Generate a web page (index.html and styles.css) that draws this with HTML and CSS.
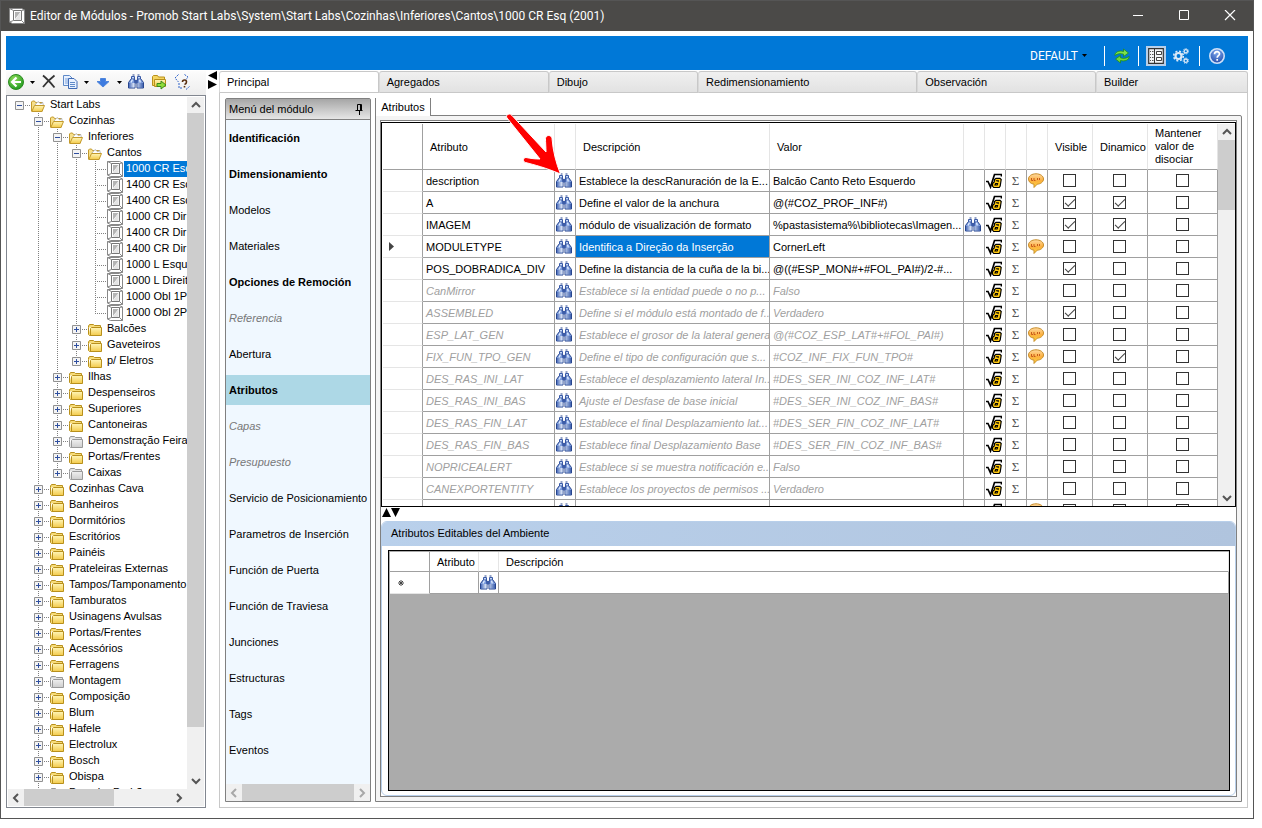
FILE: index.html
```html
<!DOCTYPE html>
<html lang="es">
<head>
    <meta charset="UTF-8">
    <meta name="viewport" content="width=device-width, initial-scale=1.0">
    <title>Editor de Módulos</title>
    <link rel="stylesheet" href="styles.css">
</head>
<body>

    <!-- Shared icons -->
    <svg class="sprite" aria-hidden="true">
        <defs>
            <linearGradient id="lens" x1="0" x2="1"><stop offset="0" stop-color="#4a6cba"/><stop offset=".4" stop-color="#f2f8ff"/><stop offset="1" stop-color="#3f62b0"/></linearGradient>
            <linearGradient id="gold" x1="0" x2="0" y1="0" y2="1"><stop offset="0" stop-color="#fff6b8"/><stop offset="1" stop-color="#f3ca4a"/></linearGradient>
            <linearGradient id="silver" x1="0" x2="0" y1="0" y2="1"><stop offset="0" stop-color="#f0f0f0"/><stop offset="1" stop-color="#cdcdcd"/></linearGradient>
            <linearGradient id="bubble" x1="0" x2="0" y1="0" y2="1"><stop offset="0" stop-color="#ffd9a0"/><stop offset=".5" stop-color="#fbb040"/><stop offset="1" stop-color="#ffd43a"/></linearGradient>
            <radialGradient id="green" cx=".4" cy=".3" r=".8"><stop offset="0" stop-color="#8fdc5a"/><stop offset="1" stop-color="#15941a"/></radialGradient>
            <radialGradient id="blue" cx=".5" cy=".25" r=".8"><stop offset="0" stop-color="#7fa8ee"/><stop offset="1" stop-color="#1f48a8"/></radialGradient>
        </defs>
        <symbol id="i-find" viewBox="0 0 16 16">
            <path d="M3.500 4.500h3l.5 4v5.500H.5V8.500zM9.500 4.500h3l3 4V14H9V8.500z" fill="#7b9bdc" stroke="#27458e"/>
            <path d="M6.500 6h3v3.500h-3z" fill="#3c5ca8"/>
            <path d="M3.500 2.500h3v2.500h-3zM9.500 2.500h3v2.500h-3z" fill="#c3d8f8" stroke="#3a5aa6"/>
            <path d="M4.500 1h2M9.500 1h2" stroke="#27458e"/>
            <path d="M1 9h5.500v4.500H1zM9.500 9H15v4.500H9.500z" fill="url(#lens)"/>
            <path d="M4.500 5.500L3 8.500M11.500 5.500l.8 3" stroke="#dceafe" stroke-width="1.400"/>
        </symbol>
        <symbol id="i-folder" viewBox="0 0 14 12">
            <path d="M.5 3.500v7l1 1h1.500M.5 3.500V2l1-1.500h4l1 1h6v2" fill="#f7dc78" stroke="#b8901c"/>
            <path d="M2.500 4.500l1-1h10v8h-11z" fill="url(#gold)" stroke="#b8901c"/>
        </symbol>
        <symbol id="i-folder-gray" viewBox="0 0 14 12">
            <path d="M.5 3.500v7l1 1h1.500M.5 3.500V2l1-1.500h4l1 1h6v2" fill="#e4e4e4" stroke="#999"/>
            <path d="M2.500 4.500l1-1h10v8h-11z" fill="url(#silver)" stroke="#999"/>
        </symbol>
        <symbol id="i-folder-open" viewBox="0 0 14 12">
            <path d="M.5 11V2l1-1h2l1 1.500h7v8.500z" fill="#f7e08a" stroke="#c39a2c"/>
            <path d="M4 5l3-3.500L10 4l1.500-2 1 3.500" fill="#fff" stroke="#aaa" stroke-width=".8"/>
            <path d="M.8 11.500L3.500 5.500h10l-2.500 6z" fill="url(#gold)" stroke="#c39a2c"/>
        </symbol>
        <symbol id="i-module" viewBox="0 0 16 16">
            <path d="M.5.500h12l3 1.500v13.500h-12L.5 14z" fill="#fff" stroke="#888"/>
            <path d="M4.500 2.500h8v10h-8z" fill="#fff" stroke="#777"/>
            <path d="M6 4h5.500L6 11z" fill="#b4b4b4"/>
            <path d="M6 12l5.500-8v8z" fill="#e4e4e4"/>
            <path d="M.5.500l4 2M15.500 2l-3 .5M.5 14l4-1.500M15.500 15.500l-3-3" stroke="#888"/>
        </symbol>
        <symbol id="i-formula" viewBox="0 0 16 16">
            <path d="M0 8.500h2L4.500 14 8.500 1.500h7v2" fill="none" stroke="#000" stroke-width="1.700"/>
            <path d="M8.500 6.500l1.500-1.200h4l1.200 1.200-1 6.500-1 1.500h-5.500L6.500 13v-2.500L8.200 9z" fill="#ffc90e" stroke="#000" stroke-width="1.200"/>
            <path d="M9.800 7.800h2.500l-.3 1.200M9 12l.6-1.500h2L11.200 12z" fill="none" stroke="#000" stroke-width="1.100"/>
        </symbol>
        <symbol id="i-comment" viewBox="0 0 16 16">
            <path d="M8 .8c4.300 0 7.500 2.200 7.500 5.200 0 2.800-2.700 5-6.300 5.200L6 14.500v-3.300C2.600 10.800.5 8.700.5 6 .5 3 3.700.8 8 .8z" fill="url(#bubble)" stroke="#c98f2c"/>
            <path d="M3.500 5v2.500H5M6 5v2.500h1.500M9.500 5v2M11.500 5v2" fill="none" stroke="#c85a1c"/>
        </symbol>
        <symbol id="i-up" viewBox="0 0 10 10"><path d="M1 7l4-4 4 4" fill="none" stroke="currentColor" stroke-width="2"/></symbol>
        <symbol id="i-down" viewBox="0 0 10 10"><path d="M1 3l4 4 4-4" fill="none" stroke="currentColor" stroke-width="2"/></symbol>
        <symbol id="i-left" viewBox="0 0 10 10"><path d="M7 1L3 5l4 4" fill="none" stroke="currentColor" stroke-width="2"/></symbol>
        <symbol id="i-right" viewBox="0 0 10 10"><path d="M3 1l4 4-4 4" fill="none" stroke="currentColor" stroke-width="2"/></symbol>
        <symbol id="i-caret" viewBox="0 0 5 3"><path d="M0 0h5L2.500 3z"/></symbol>
    </svg>

    <div class="window">
        <header class="title-bar">
            <svg class="icon title-icon"><use href="#i-module"/></svg>
            <h1 class="title">Editor de Módulos - Promob Start Labs\System\Start Labs\Cozinhas\Inferiores\Cantos\1000 CR Esq (2001)</h1>
            <div class="window-controls">
                <button aria-label="Minimizar"><svg width="12" height="12"><path d="M1 5.500h10" stroke="#fff"/></svg></button>
                <button aria-label="Maximizar"><svg width="12" height="12"><path d="M1.500.5h9v9h-9z" fill="none" stroke="#fff"/></svg></button>
                <button aria-label="Cerrar"><svg width="12" height="12"><path d="M1 0l10 10M11 0L1 10" stroke="#fff" stroke-width="1.200"/></svg></button>
            </div>
        </header>

        <div class="content">
            <div class="ribbon">
                <select class="profile" aria-label="Perfil"><option>DEFAULT</option></select>
                <svg class="caret"><use href="#i-caret"/></svg>
                <span class="divider refresh-divider"></span>
                <button class="ribbon-button" aria-label="Actualizar">
                    <svg class="icon" viewBox="0 0 16 16"><path d="M.8 7.500C1 4 5 2.200 9.500 3.500V1l5 4-5 3.500V6.200C6.500 5.200 4 5.500.8 7.500z" fill="#7ee04c" stroke="#1d8a1d" stroke-width=".8"/><path d="M15.200 8.500C15 12 11 13.800 6.500 12.500V15l-5-4 5-3.500v2.300c3 1 5.500.7 8.700-1.300z" fill="#6fd63c" stroke="#1d8a1d" stroke-width=".8"/></svg>
                </button>
                <span class="divider"></span>
                <button class="ribbon-button active" aria-label="Propiedades">
                    <svg class="icon" viewBox="0 0 16 16"><path d="M.7.700h14.600v14.600H.7z" fill="#f4f6f8" stroke="#333" stroke-width="1.200"/><path d="M6.500 1v14" stroke="#333"/><path d="M2 3.500h1M2 6.500h1M2 9.500h1M2 12.500h1M4 3.500h1.500M4 6.500h1.500M4 9.500h1.500M4 12.500h1.500" stroke="#555"/><path d="M8.500 3.500h5v3h-5zM8.500 9.500h5v3h-5z" fill="#fff" stroke="#444"/></svg>
                </button>
                <button class="ribbon-button" aria-label="Configuración">
                    <svg class="icon" viewBox="0 0 16 16" fill="none" stroke="#dce9f7"><circle cx="5.500" cy="8" r="3" stroke-width="2.200"/><circle cx="5.500" cy="8" r="4.800" stroke-width="1.600" stroke-dasharray="2 1.770"/><circle cx="12.800" cy="3.300" r="1.700" stroke-width="1.300"/><circle cx="12.800" cy="3.300" r="2.700" stroke-dasharray="1.200 1.220"/><circle cx="12.800" cy="12.700" r="1.700" stroke-width="1.300"/><circle cx="12.800" cy="12.700" r="2.700" stroke-dasharray="1.200 1.220"/></svg>
                </button>
                <span class="divider"></span>
                <button class="ribbon-button help" aria-label="Ayuda">
                    <svg class="icon" viewBox="0 0 16 16"><circle cx="8" cy="8" r="7.200" fill="url(#blue)" stroke="#cfe0f8" stroke-width="1.600"/><path d="M5.500 6.300C5.500 2.800 10.700 3 10.500 6c-.1 1.600-2.300 1.700-2.300 3.700M8.200 11v1.800" fill="none" stroke="#fff" stroke-width="1.700"/></svg>
                </button>
            </div>

            <div class="workspace">
                <aside class="library">
                    <div class="tools">
                        <button aria-label="Atrás"><svg class="icon" viewBox="0 0 16 16"><circle cx="8" cy="8" r="7.500" fill="url(#green)" stroke="#2b8a1f"/><path d="M8.500 3.500L4 8l4.500 4.500M4.500 8H13" fill="none" stroke="#fff" stroke-width="2.200"/></svg></button>
                        <button class="drop" aria-label="Más"><svg class="caret"><use href="#i-caret"/></svg></button>
                        <button aria-label="Eliminar"><svg class="icon" viewBox="0 0 16 16"><path d="M2 1.500q5 4 11.500 12M13.500 1.500Q7 6.500 2 13" fill="none" stroke="#333" stroke-width="1.800"/></svg></button>
                        <button class="copy" aria-label="Copiar"><svg class="icon" viewBox="0 0 16 16"><path d="M1.500 1.500h6l3 3v7h-9z" fill="#e8f1ff" stroke="#5f8ac8"/><path d="M3 5h5M3 7h5M3 9h5" stroke="#7ea3da"/><path d="M6.500 4.500h5.500l3 3v7H6.500z" fill="#e8f1ff" stroke="#3f6ab4"/><path d="M8 8.500h5M8 10.500h5M8 12.500h5" stroke="#5f8ac8"/></svg></button>
                        <button class="drop" aria-label="Más copias"><svg class="caret"><use href="#i-caret"/></svg></button>
                        <button aria-label="Bajar"><svg class="icon" viewBox="0 0 16 16"><path d="M5.500 4.500h5v3h3.500L8 13 2 7.500h3.500z" fill="#3d7be0" stroke="#4f86dc"/></svg></button>
                        <button class="drop" aria-label="Más movimientos"><svg class="caret"><use href="#i-caret"/></svg></button>
                        <button aria-label="Buscar"><svg class="icon"><use href="#i-find"/></svg></button>
                        <button class="spaced" aria-label="Mover"><svg class="icon" viewBox="0 0 16 16"><path d="M1.500 11.500v-9l1-1h4l1 1.500h6v8.500z" fill="#f5d560" stroke="#b8901c"/><path d="M3.500 5.500h11v7h-11z" fill="url(#gold)" stroke="#b8901c"/><path d="M6 9.500h4V7l5 4-5 4v-2.500H6z" fill="#8fdc3a" stroke="#3a8a1f"/></svg></button>
                        <button class="spaced" aria-label="Consultar"><svg class="icon" viewBox="0 0 16 16"><path d="M4.500.5L1 4l3.500 4M10.500.5L14 3l-2 2.500M5 9v5h4" fill="none" stroke="#2f62c8" stroke-dasharray="2 1"/><path d="M8.500 8q0-2 2-2t2 2-2 2.500M10.500 12v1.500" fill="none" stroke="#5a3010" stroke-width="1.600"/><path d="M12 15.500l3.500-3" stroke="#2f62c8" stroke-dasharray="2 1"/></svg></button>
                    </div>
                    <div class="tree-box">
                        <div class="tree-view">
                            <ul class="tree" id="tree"></ul>
                            <div class="scroll vertical">
                                <svg class="arrow"><use href="#i-up"/></svg>
                                <div class="track"><div class="thumb thumb-tree"></div></div>
                                <svg class="arrow"><use href="#i-down"/></svg>
                            </div>
                        </div>
                        <div class="scroll tree-bottom">
                            <svg class="arrow"><use href="#i-left"/></svg>
                            <div class="track"><div class="thumb thumb-wide"></div></div>
                            <svg class="arrow"><use href="#i-right"/></svg>
                        </div>
                    </div>
                </aside>

                <div class="splitter">
                    <svg width="9" height="18"><path d="M9 0v9L0 4.500zM0 9v9l9-4.500z"/></svg>
                </div>

                <main class="editor">
                    <nav class="tabs">
                        <button class="tab tab-principal selected">Principal</button>
                        <button class="tab tab-agregados">Agregados</button>
                        <button class="tab tab-dibujo">Dibujo</button>
                        <button class="tab tab-redim">Redimensionamiento</button>
                        <button class="tab tab-observacion">Observación</button>
                        <button class="tab tab-builder">Builder</button>
                    </nav>

                    <div class="page">
                        <section class="module-menu">
                            <div class="menu-header">
                                <h2>Menú del módulo</h2>
                                <svg width="8" height="11"><path d="M2.500.5h4v6h-4zM.5 6.500h7M4.500 7v4M5.500 1v6" fill="none" stroke="#000"/></svg>
                            </div>
                            <nav class="menu-items">
                                <a href="#" class="strong">Identificación</a>
                                <a href="#" class="strong">Dimensionamiento</a>
                                <a href="#">Modelos</a>
                                <a href="#">Materiales</a>
                                <a href="#" class="strong">Opciones de Remoción</a>
                                <a href="#" class="off">Referencia</a>
                                <a href="#">Abertura</a>
                                <a href="#" class="strong current">Atributos</a>
                                <a href="#" class="off">Capas</a>
                                <a href="#" class="off">Presupuesto</a>
                                <a href="#">Servicio de Posicionamiento</a>
                                <a href="#">Parametros de Inserción</a>
                                <a href="#">Función de Puerta</a>
                                <a href="#">Función de Traviesa</a>
                                <a href="#">Junciones</a>
                                <a href="#">Estructuras</a>
                                <a href="#">Tags</a>
                                <a href="#">Eventos</a>
                            </nav>
                            <div class="scroll idle">
                                <svg class="arrow"><use href="#i-left"/></svg>
                                <div class="track"><div class="thumb"></div></div>
                                <svg class="arrow"><use href="#i-right"/></svg>
                            </div>
                        </section>

                        <section class="attributes">
                            <div class="sub-tabs"><button class="sub-tab">Atributos</button></div>
                            <div class="sub-page">
                                <div class="sub-body">
                                    <div class="grid-box">
                                        <div class="grid-view">
                                            <table class="grid">
                                                <colgroup>
                                                    <col class="c-head"><col class="c-name"><col class="c-icon"><col><col>
                                                    <col class="c-icon"><col class="c-icon"><col class="c-icon"><col class="c-icon">
                                                    <col class="c-visible"><col class="c-dynamic"><col class="c-keep">
                                                </colgroup>
                                                <thead>
                                                    <tr>
                                                        <th class="row-head"></th><th>Atributo</th><th></th><th>Descripción</th><th>Valor</th>
                                                        <th></th><th></th><th></th><th></th>
                                                        <th>Visible</th><th>Dinamico</th><th class="wrap">Mantener valor de disociar</th>
                                                    </tr>
                                                </thead>
                                                <tbody id="rows"></tbody>
                                            </table>
                                        </div>
                                        <div class="scroll vertical">
                                            <svg class="arrow"><use href="#i-up"/></svg>
                                            <div class="track"><div class="thumb thumb-grid"></div></div>
                                            <svg class="arrow"><use href="#i-down"/></svg>
                                        </div>
                                    </div>
                                    <div class="row-splitter"><svg width="18" height="9"><path d="M0 9h9L4.500 0zM9 0h9l-4.500 9z"/></svg></div>
                                    <div class="ambient">
                                        <h2 class="ambient-title">Atributos Editables del Ambiente</h2>
                                        <div class="ambient-body">
                                            <table class="grid small-grid">
                                                <colgroup><col class="c-head"><col class="c-short"><col class="c-find"><col></colgroup>
                                                <thead><tr><th class="row-head"></th><th>Atributo</th><th></th><th>Descripción</th></tr></thead>
                                                <tbody>
                                                    <tr><td class="row-head"><svg class="star" viewBox="0 0 6 6"><path d="M3 0v6M0 3h6M1 1l4 4M5 1L1 5" stroke="#444"/></svg></td><td></td><td class="icon-cell"><svg class="icon"><use href="#i-find"/></svg></td><td></td></tr>
                                                </tbody>
                                            </table>
                                        </div>
                                    </div>
                                    <svg class="pointer" viewBox="0 0 60 66"><path d="M7 2.500C5-.5 0 1.500 2 5l33 41c-5 0-9-.5-14-1.500-3 0-3.500 4-.5 5C30 52 40 54.500 55.500 61 51 50 48 38 47 25.500c-.5-4-6-4-6.500 0 0 4 .5 9 .5 13.500z" fill="#fe0000" stroke="#fff"/></svg>
                                </div>
                            </div>
                        </section>
                    </div>
                </main>
            </div>
        </div>
    </div>

    <script src="script.js"></script>
</body>
</html>
```
FILE: styles.css
```css
/* Reset default styles */
* {
    box-sizing: border-box;
}

body, h1, h2, ul {
    margin: 0;
    padding: 0;
}

body {
    height: 100vh;
    padding: 0 8px 9px 0;
    background: #fff;
    color: #000;
    font-family: "Liberation Sans", Arial, sans-serif;
    font-size: 11px;
    line-height: 16px;
    overflow: hidden;
}

h1, h2 {
    font-size: inherit;
    font-weight: normal;
}

button, select {
    margin: 0;
    padding: 0;
    border: none;
    background: none;
    color: inherit;
    font: inherit;
}

a {
    color: inherit;
    text-decoration: none;
}

svg {
    display: block;
    flex: none;
}

.sprite {
    position: absolute;
    width: 0;
    height: 0;
}

.icon {
    width: 16px;
    height: 16px;
}

.caret {
    width: 5px;
    height: 3px;
}

/* Window frame */
.window {
    display: flex;
    flex-direction: column;
    height: 100%;
    border: 1px solid #555;
}

.title-bar {
    display: flex;
    align-items: center;
    flex: none;
    height: 30px;
    padding-left: 8px;
    background: #4b4a48;
    color: #fff;
}

.title {
    flex: 1;
    margin-left: 5px;
    font-family: Roboto, "Open Sans", sans-serif;
    font-size: 12px;
    white-space: nowrap;
}

.window-controls {
    display: flex;
}

.window-controls button {
    display: flex;
    align-items: center;
    justify-content: center;
    width: 46px;
    height: 30px;
}

.content {
    display: flex;
    flex: 1;
    flex-direction: column;
    min-height: 0;
    padding: 5px 5px 10px;
}

/* Blue bar */
.ribbon {
    display: flex;
    align-items: center;
    justify-content: flex-end;
    flex: none;
    height: 34px;
    padding: 5px 21px 0 0;
    background: #0078d7;
}

.profile {
    width: 52px;
    appearance: none;
    color: #fff;
    font-family: Roboto, "Open Sans", sans-serif;
    font-size: 12px;
}

.divider {
    width: 1px;
    height: 20px;
    background: #fff;
    margin: 0 7px 0 6px;
}

.refresh-divider {
    margin-left: 17px;
}

.ribbon-button {
    display: flex;
    align-items: center;
    justify-content: center;
    width: 20px;
    height: 20px;
}

.ribbon-button + .ribbon-button {
    margin: 0 2px 0 5px;
}

.ribbon-button.active {
    background: #b9cfe8;
}

.workspace {
    display: flex;
    flex: 1;
    min-height: 0;
    padding-top: 1px;
}

/* Library tree */
.library {
    display: flex;
    flex-direction: column;
    flex: none;
    width: 200px;
}

.tools {
    display: flex;
    align-items: center;
    flex: none;
    height: 24px;
    padding: 0 0 2px 2px;
    background: linear-gradient(#fcfcfc, #ededed);
}

.tools .drop {
    display: flex;
    justify-content: center;
    width: 17px;
}

.tools .copy {
    margin-left: 5px;
}

.tools .spaced {
    margin-left: 7px;
}

.tree-box {
    display: flex;
    flex: 1;
    flex-direction: column;
    min-height: 0;
    padding: 1px;
    border: 1px solid #828790;
}

.tree-view {
    display: flex;
    flex: 1;
    min-height: 0;
}

.tree {
    flex: 1;
    min-width: 0;
    padding-left: 7px;
    overflow: hidden;
}

.tree ul {
    padding-left: 19px;
}

.tree li {
    list-style: none;
}

/* dotted branch running down beside the expanders */
.tree ul > li {
    background: repeating-linear-gradient(#808080 0 1px, transparent 1px 2px) 4px 0 / 1px 100% no-repeat;
}

.tree ul > li:last-child:not(.more) {
    background-size: 1px 9px;
}

.node {
    display: flex;
    align-items: center;
    height: 16px;
    white-space: nowrap;
}

.node::before {
    content: "";
    flex: none;
    width: 16px;
    height: 1px;
    background: repeating-linear-gradient(90deg, #808080 0 1px, transparent 1px 2px) 4px 0 no-repeat;
}

.node.toggle::before {
    width: 6px;
    order: 1;
    background-position: 0 0;
}

.expander {
    width: 9px;
    height: 9px;
    margin-right: 1px;
}

.node-icon {
    order: 2;
    width: 16px;
    height: 16px;
    padding: 3px 2px 1px 0;
}

.node-icon.module {
    padding: 0;
}

.node-label {
    order: 3;
    height: 16px;
    margin-left: 1px;
    padding: 0 2px;
    line-height: 14px;
}

.node-label.selected {
    background: #0078d7;
    color: #fff;
}

/* Scroll bars */
.scroll {
    display: flex;
    align-items: center;
    flex: none;
    height: 17px;
    background: #f0f0f0;
    color: #555;
}

.scroll.vertical {
    flex-direction: column;
    width: 17px;
    height: auto;
}

.arrow {
    width: 10px;
    height: 10px;
    margin: 3px;
}

.scroll.idle {
    color: #a8a8a8;
}

.track {
    flex: 1;
    align-self: stretch;
}

.thumb {
    height: 100%;
    background: #cdcdcd;
}

.thumb-tree {
    height: 93%;
}

.thumb-grid {
    height: 20%;
}

.thumb-wide {
    width: 61%;
}

.tree-bottom {
    padding-right: 17px;
}

.splitter {
    flex: none;
    width: 13px;
    padding-left: 2px;
}

/* Editor tabs */
.editor {
    display: flex;
    flex: 1;
    flex-direction: column;
    min-width: 0;
}

.tabs {
    display: flex;
    flex: none;
    height: 22px;
}

.tab {
    min-width: 0;
    padding-left: 7px;
    border: 1px solid #c8c8c8;
    border-left-color: #d8d8d8;
    border-radius: 3px 3px 0 0;
    background: linear-gradient(#f0f0f0, #e2e2e2);
    text-align: left;
}

.tab.selected {
    background: #fff;
}

.tab-principal { flex: 159 1 0; }
.tab-agregados { flex: 170 1 0; }
.tab-dibujo { flex: 148 1 0; }
.tab-redim { flex: 222 1 0; }
.tab-observacion { flex: 179 1 0; }
.tab-builder { flex: 151 1 0; }

.page {
    display: flex;
    flex: 1;
    gap: 4px;
    min-height: 0;
    padding: 5px;
    border: 1px solid #c8c8c8;
    border-top: none;
}

/* Module menu */
.module-menu {
    display: flex;
    flex: none;
    flex-direction: column;
    width: 146px;
    border: 1px solid #808080;
    border-radius: 2px 2px 0 0;
    background: #f0f8ff;
}

.menu-header {
    display: flex;
    align-items: center;
    justify-content: space-between;
    flex: none;
    height: 21px;
    padding: 0 7px 0 3px;
    border-bottom: 1px solid #808080;
    background: linear-gradient(#a6a6a6, #e6e6e6);
}

.menu-items {
    display: flex;
    flex: 1;
    flex-direction: column;
    gap: 6px;
    min-height: 0;
    padding-top: 3px;
    overflow: hidden;
}

.menu-items a {
    flex: none;
    padding-left: 3px;
    line-height: 30px;
    white-space: nowrap;
}

.menu-items .strong {
    font-weight: bold;
}

.menu-items .off {
    color: #777;
    font-style: italic;
}

.menu-items .current {
    background: #add8e6;
}

/* Attributes page */
.attributes {
    display: flex;
    flex: 1;
    flex-direction: column;
    min-width: 0;
}

.sub-tabs {
    z-index: 1;
    display: flex;
    flex: none;
    margin-bottom: -1px;
}

.sub-tab {
    width: 56px;
    height: 18px;
    border: 1px solid #808080;
    border-width: 0 1px;
    background: #fff;
}

.sub-page {
    display: flex;
    flex: 1;
    min-height: 0;
    padding: 4px;
    border: 1px solid #808080;
    border-radius: 0 2px 0 0;
    background: #f4f4f4;
}

.sub-body {
    position: relative;
    display: flex;
    flex: 1;
    flex-direction: column;
    min-width: 0;
    padding-top: 1px;
    border: 1px solid #808080;
    background: #fff;
}

.grid-box {
    display: flex;
    flex: 1;
    min-height: 0;
    padding: 1px 0 0 1px;
    border: 1px solid #000;
}

.grid-view {
    flex: 1;
    min-width: 0;
    overflow: hidden;
}

.grid {
    width: 100%;
    border-spacing: 0;
    table-layout: fixed;
}

.c-head { width: 40px; }
.c-name { width: 132px; }
.c-icon { width: 21px; }
.c-visible { width: 45px; }
.c-dynamic { width: 55px; }
.c-keep { width: 70px; }
.c-short { width: 49px; }
.c-find { width: 20px; }

.grid th,
.grid td {
    border: solid #a0a0a0;
    border-width: 0 1px 1px 0;
    overflow: hidden;
    text-align: left;
    white-space: nowrap;
}

.grid th {
    height: 46px;
    padding: 0 0 0 7px;
    border-right-color: #e5e5e5;
    font-weight: normal;
}

.grid th.wrap {
    line-height: 13px;
    white-space: normal;
}

.grid td {
    height: 22px;
    padding: 0 0 0 3px;
}

.grid .row-head {
    border-right-color: #a0a0a0;
}

.grid td.row-head {
    padding-left: 6px;
    border-bottom-color: #e5e5e5;
}

.grid td.icon-cell {
    padding: 0 2px 0 1px;
}

.grid td.check-cell,
.grid td.sum-cell {
    padding: 0 1px 0 0;
    text-align: center;
}

.sum-cell {
    color: #555;
    font-family: "Liberation Serif", serif;
    font-size: 13px;
}

.inherited {
    color: #a0a0a0;
    font-style: italic;
}

.inherited .sum-cell {
    font-style: normal;
    color: #555;
}

.grid td.selected {
    background: #0078d7;
    color: #fff;
}

.check-cell input {
    display: block;
    width: 13px;
    height: 13px;
    margin: 0 auto;
    border: 1px solid #333;
    appearance: none;
    background: #fff;
}

.check-cell input:checked::after {
    content: "";
    display: block;
    width: 9px;
    height: 4px;
    margin: 2px 1px;
    border: solid #444;
    border-width: 0 0 1px 1px;
    transform: rotate(-45deg);
}

/* Ambient attributes */
.row-splitter {
    flex: none;
    height: 14px;
    padding: 1px 0 0 1px;
}

.ambient {
    display: flex;
    flex: none;
    flex-direction: column;
    height: 275px;
    border: 1px solid #b8cfea;
    border-radius: 6px;
}

.ambient-title {
    height: 24px;
    padding-left: 9px;
    border-radius: 5px 5px 0 0;
    background: linear-gradient(90deg, #b9d0eb, #b0c4de);
    line-height: 22px;
}

.ambient-body {
    flex: 1;
    margin: 4px 5px 4px 6px;
    padding: 1px 0 0 1px;
    border: 1px solid #000;
    background: #ababab;
}

.small-grid th,
.small-grid td {
    background: #fff;
}

.small-grid th {
    height: 20px;
}

.grid .star {
    width: 6px;
    height: 6px;
    margin-left: 2px;
}

/* Red callout over the first row */
.pointer {
    position: absolute;
    top: -8px;
    left: 124px;
    width: 60px;
    height: 66px;
}
```
FILE: script.js
```js
const openFolder = (name, children) => ({ name, children });

const library = openFolder("Start Labs", [
    openFolder("Cozinhas", [
        openFolder("Inferiores", [
            openFolder("Cantos", [
                "1000 CR Esq", "1400 CR Esq", "1400 CR Esq", "1000 CR Dir", "1400 CR Dir", "1400 CR Dir",
                "1000 L Esqu", "1000 L Direit", "1000 Obl 1P", "1000 Obl 2P"
            ].map((name, i) => ({ name, module: true, selected: i === 0 }))),
            "Balcões", "Gaveteiros", "p/ Eletros"
        ]),
        "Ilhas", "Despenseiros", "Superiores", "Cantoneiras",
        { name: "Demonstração Feira", gray: true },
        "Portas/Frentes",
        { name: "Caixas", gray: true }
    ]),
    "Cozinhas Cava", "Banheiros", "Dormitórios", "Escritórios", "Painéis", "Prateleiras Externas",
    "Tampos/Tamponamento", "Tamburatos", "Usinagens Avulsas", "Portas/Frentes", "Acessórios", "Ferragens",
    { name: "Montagem", gray: true },
    "Composição", "Blum", "Hafele", "Electrolux", "Bosch", "Obispa",
    { name: "Parceiro Padrão", gray: true, more: true }
]);

function expander(open) {
    return `<svg class="expander" viewBox="0 0 9 9"><path d="M.5.5h8v8h-8z" fill="#f4f4f4" stroke="#919191"/>
        <path d="M2 4.5h5${open ? "" : "M4.5 2v5"}" stroke="#2f4f9f"/></svg>`;
}

function treeItem(item) {
    if (typeof item === "string") item = { name: item };
    const icon = item.module ? "module" : item.children ? "folder-open" : item.gray ? "folder-gray" : "folder";
    return `<li class="${item.more ? "more" : ""}">
        <div class="node ${item.module ? "" : "toggle"}">
            ${item.module ? "" : expander(item.children)}
            <svg class="node-icon ${item.module ? "module" : ""}"><use href="#i-${icon}"/></svg>
            <span class="node-label ${item.selected ? "selected" : ""}">${item.name}</span>
        </div>
        ${item.children ? `<ul>${item.children.map(treeItem).join("")}</ul>` : ""}
    </li>`;
}

document.getElementById("tree").innerHTML = treeItem(library);

// name, description, value, visible, dynamic, comment, inherited
const attributes = [
    ["description", "Establece la descRanuración de la E...", "Balcão Canto Reto Esquerdo", 0, 0, 1, 0],
    ["A", "Define el valor de la anchura", "@(#COZ_PROF_INF#)", 1, 1, 0, 0],
    ["IMAGEM", "módulo de visualización de formato", "%pastasistema%\\bibliotecas\\Imagen...", 1, 1, 0, 0],
    ["MODULETYPE", "Identifica a Direção da Inserção", "CornerLeft", 0, 0, 1, 0],
    ["POS_DOBRADICA_DIV", "Define la distancia de la cuña de la bi...", "@((#ESP_MON#+#FOL_PAI#)/2-#...", 1, 0, 0, 0],
    ["CanMirror", "Establece si la entidad puede o no p...", "Falso", 0, 0, 0, 1],
    ["ASSEMBLED", "Define si el módulo está montado de f...", "Verdadero", 1, 0, 0, 1],
    ["ESP_LAT_GEN", "Establece el grosor de la lateral general", "@(#COZ_ESP_LAT#+#FOL_PAI#)", 0, 0, 1, 1],
    ["FIX_FUN_TPO_GEN", "Define el tipo de configuración que s...", "#COZ_INF_FIX_FUN_TPO#", 0, 1, 1, 1],
    ["DES_RAS_INI_LAT", "Establece el desplazamiento lateral In...", "#DES_SER_INI_COZ_INF_LAT#", 0, 0, 0, 1],
    ["DES_RAS_INI_BAS", "Ajuste el Desfase de base inicial", "#DES_SER_INI_COZ_INF_BAS#", 0, 0, 0, 1],
    ["DES_RAS_FIN_LAT", "Establece el final Desplazamiento lat...", "#DES_SER_FIN_COZ_INF_LAT#", 0, 0, 0, 1],
    ["DES_RAS_FIN_BAS", "Establece final Desplazamiento Base", "#DES_SER_FIN_COZ_INF_BAS#", 0, 0, 0, 1],
    ["NOPRICEALERT", "Establece si se muestra notificación e...", "Falso", 0, 0, 0, 1],
    ["CANEXPORTENTITY", "Establece los proyectos de permisos ...", "Verdadero", 0, 0, 0, 1],
    ["", "", "", 0, 0, 1, 1]
];

const icon = name => `<svg class="icon"><use href="#i-${name}"/></svg>`;
const check = (label, on) => `<td class="check-cell"><input type="checkbox" aria-label="${label}"${on ? " checked" : ""}></td>`;

document.getElementById("rows").innerHTML = attributes.map(([name, text, value, visible, dynamic, comment, inherited]) => {
    const current = name === "MODULETYPE";
    return `<tr class="${inherited ? "inherited" : ""}">
        <td class="row-head">${current ? '<svg width="5" height="9"><path d="M0 0l5 4.500L0 9z" fill="#444"/></svg>' : ""}</td>
        <td>${name}</td>
        <td class="icon-cell">${icon("find")}</td>
        <td class="${current ? "selected" : ""}">${text}</td>
        <td>${value}</td>
        <td class="icon-cell">${name === "IMAGEM" ? icon("find") : ""}</td>
        <td class="icon-cell">${icon("formula")}</td>
        <td class="sum-cell">Σ</td>
        <td class="icon-cell">${comment ? icon("comment") : ""}</td>
        ${check("Visible", visible)}${check("Dinamico", dynamic)}${check("Mantener valor de disociar", 0)}
    </tr>`;
}).join("");
```
